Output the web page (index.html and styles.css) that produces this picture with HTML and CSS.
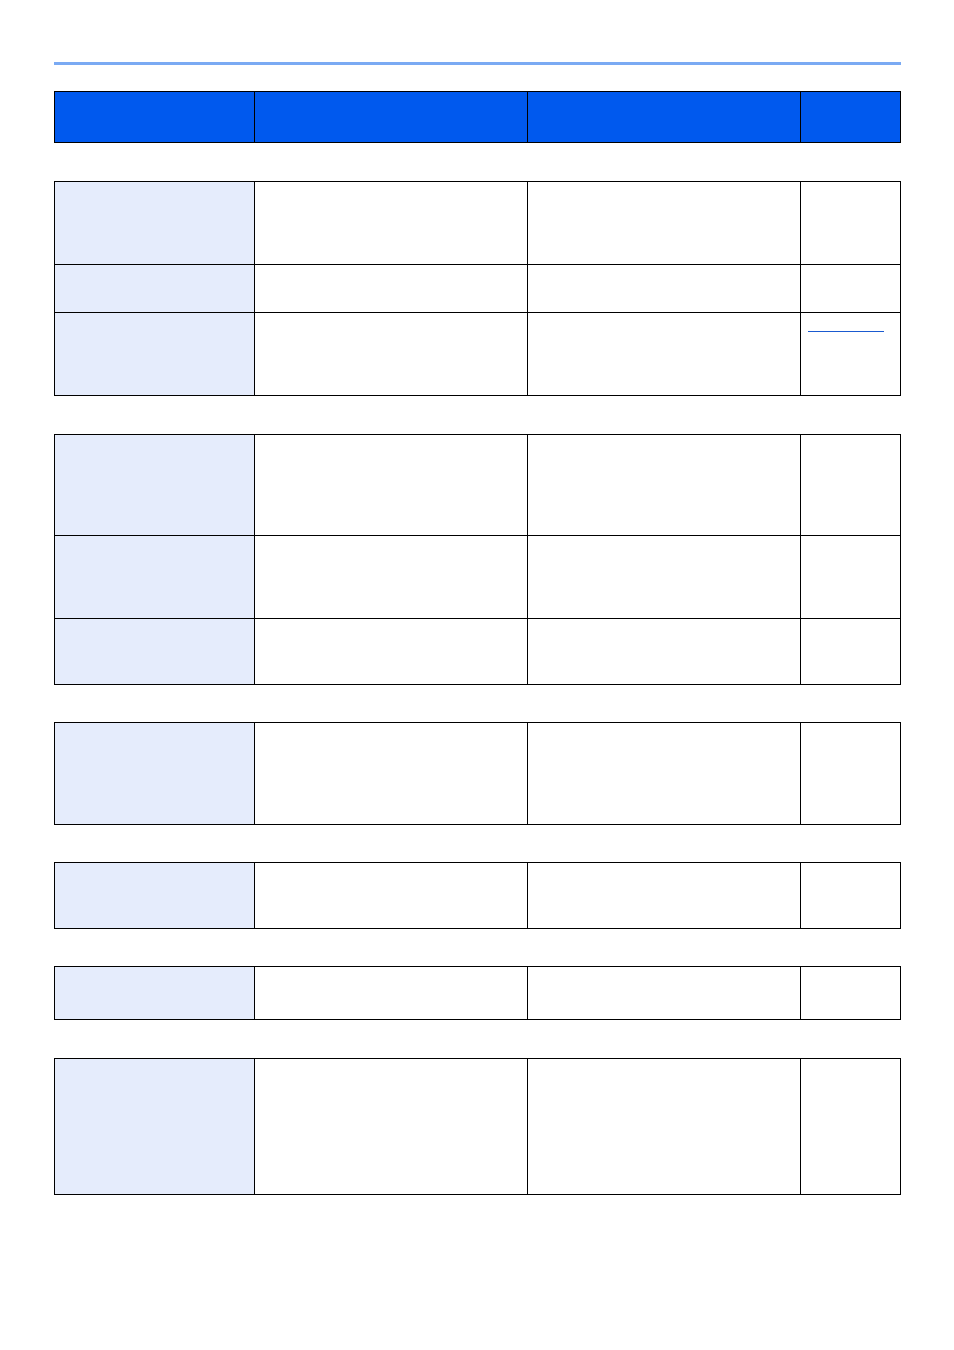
FILE: index.html
```html
<!DOCTYPE html>
<html>
<head>
<meta charset="utf-8">
<link rel="stylesheet" href="styles.css">
</head>
<body>
<div class="page">
  <div class="rule"></div>

  <div class="tbl tbl-head">
    <div class="h r50"></div><div class="h"></div><div class="h"></div><div class="h"></div>
  </div>

  <div class="tbl gap38">
    <div class="k r82"></div><div class="c"></div><div class="c"></div><div class="c"></div>
    <div class="k r47"></div><div class="c"></div><div class="c"></div><div class="c"></div>
    <div class="k r82"></div><div class="c"></div><div class="c"></div><div class="c"><span class="link"></span></div>
  </div>

  <div class="tbl gap38">
    <div class="k r100"></div><div class="c"></div><div class="c"></div><div class="c"></div>
    <div class="k r82"></div><div class="c"></div><div class="c"></div><div class="c"></div>
    <div class="k r65"></div><div class="c"></div><div class="c"></div><div class="c"></div>
  </div>

  <div class="tbl gap37">
    <div class="k r101"></div><div class="c"></div><div class="c"></div><div class="c"></div>
  </div>

  <div class="tbl gap37">
    <div class="k r65"></div><div class="c"></div><div class="c"></div><div class="c"></div>
  </div>

  <div class="tbl gap37">
    <div class="k r52"></div><div class="c"></div><div class="c"></div><div class="c"></div>
  </div>

  <div class="tbl gap38">
    <div class="k r135"></div><div class="c"></div><div class="c"></div><div class="c"></div>
  </div>
</div>
</body>
</html>
```

FILE: styles.css
```css
html, body {
  margin: 0;
  padding: 0;
  background: #ffffff;
  font-family: "Liberation Sans", Arial, sans-serif;
}
.page {
  padding: 62px 0 0 54px;
  width: 847px;
}
.rule {
  height: 3px;
  background: #7aaaf3;
  width: 847px;
}
.tbl {
  display: grid;
  grid-template-columns: 199px 272px 272px 99px;
  gap: 1px;
  padding: 1px;
  background: #000000;
  width: 845px;
}
.tbl-head {
  margin-top: 26px;
}
.gap38 { margin-top: 38px; }
.gap37 { margin-top: 37px; }
.h { background: #0059ee; }
.k { background: #e5ecfc; }
.c { background: #ffffff; position: relative; }
.r47 { height: 47px; }
.r50 { height: 50px; }
.r52 { height: 52px; }
.r65 { height: 65px; }
.r82 { height: 82px; }
.r100 { height: 100px; }
.r101 { height: 101px; }
.r135 { height: 135px; }
.link {
  display: block;
  margin: 18px 0 0 7px;
  width: 76px;
  height: 1px;
  background: #1a5ad0;
}
```
